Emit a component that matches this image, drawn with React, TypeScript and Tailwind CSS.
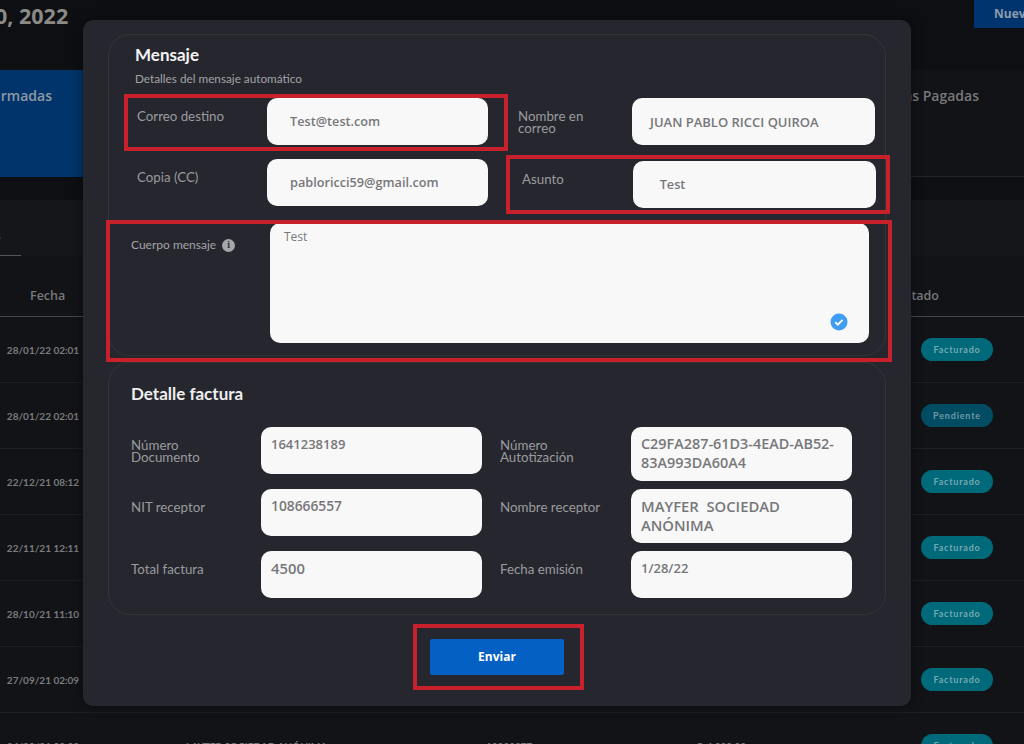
import React from "react";

const poppins = "font-['Lato',sans-serif]";
const mont = "font-['Open_Sans',sans-serif]";

function RedBox({ c }: { c: string }) {
  return <div className={`absolute border-[4px] border-[#c8212c] pointer-events-none ${c}`} />;
}

function Field({ label, value, labelW, inputW, h = "h-[47px]", px, top = "pt-[8px]", size = "text-[12.7px]", labelTop = "pt-[12px]", outer = "" }: { label: string; value: React.ReactNode; labelW: string; inputW: string; h?: string; px: string; top?: string; size?: string; labelTop?: string; outer?: string }) {
  return (
    <div className={`flex items-start ${outer}`}>
      <div className={`${labelW} ${labelTop} ${poppins} text-[13.3px] leading-[12px] text-[#9a9b9f]`}>{label}</div>
      <div className={`${inputW} ${h} ${px} ${top} ${size} ${mont} rounded-[10px] bg-[#f8f8f8] font-semibold leading-[18.5px] text-[#77777a]`}>{value}</div>
    </div>
  );
}

type Row = { d: string; s: string; name?: string; nit?: string; amt?: string };
const rows: Row[] = [
  { d: "28/01/22 02:01", s: "Facturado" },
  { d: "28/01/22 02:01", s: "Pendiente" },
  { d: "22/12/21 08:12", s: "Facturado" },
  { d: "22/11/21 12:11", s: "Facturado" },
  { d: "28/10/21 11:10", s: "Facturado" },
  { d: "27/09/21 02:09", s: "Facturado" },
  { d: "24/08/21 02:08", s: "Facturado", name: "LAYTER SOCIEDAD ANÓNIMA", nit: "10000377", amt: "Q 4,000.00" },
];

export default function App() {
  return (
    <div className="relative h-[744px] w-[1024px] overflow-hidden bg-[#121317]">
      <div className={`flex h-[70px] items-start justify-between bg-[#0e0f12] ${mont}`}>
        <div className="-ml-[5px] text-[21.5px] font-bold leading-[32px] text-[#8b8a87]">0, 2022</div>
        <div className="flex h-[28px] w-[50px] items-center overflow-hidden whitespace-nowrap bg-[#00346e] pl-[20px] text-[12px] font-bold text-[#8d9cb0]">Nueva</div>
      </div>
      <div className="flex h-[107px]">
        <div className={`w-[83px] bg-[#00346a] pt-[15px] pr-[31px] text-right text-[14px] font-semibold text-[#8f98a3] ${mont}`}>rmadas</div>
        <div className={`flex-1 border-b border-[#25262a] pt-[15px] pr-[45px] text-right text-[14px] font-semibold text-[#77787c] ${mont}`}>Facturas Pagadas</div>
      </div>
      <div className="h-[79px] bg-[#15161a]">
        <div className="h-[23px] bg-[#0e0f12]" />
        <div className={`mt-[27px] h-[29px] w-[21px] border-b border-[#55565a] pl-0 text-[12px] leading-[18px] text-[#77787c] ${mont}`}>
          <span className="-ml-[5px] inline-block">s</span>
        </div>
      </div>
      <div className={`flex h-[61px] items-end justify-between border-b border-[#45464a] pb-[10px] ${mont} text-[12.5px] font-semibold text-[#77787b]`}>
        <span className="ml-[30px]">Fecha</span>
        <span className="mr-[85px]">Estado</span>
      </div>
      {rows.map((r, i) => (
        <div key={i} className={`flex h-[66px] shrink-0 items-center justify-between border-b border-[#1d1e22] ${poppins}`}>
          <div className="flex items-center pt-[1px] text-[10px] font-bold text-[#7b7b7d]">
            <span className="w-[86px] text-center">{r.d}</span>
            {r.name && <span className="ml-[100px] w-[300px]">{r.name}</span>}
            {r.nit && <span className="w-[210px]">{r.nit}</span>}
            {r.amt && <span>{r.amt}</span>}
          </div>
          <span className={`mr-[31px] flex h-[23px] w-[72px] items-center justify-center rounded-full text-[9px] font-bold tracking-[0.8px] ${r.s === "Pendiente" ? "bg-[#004d63] text-[#6f9aa6]" : "bg-[#006a7a] text-[#76a8b0]"}`}>{r.s}</span>
        </div>
      ))}

      <div className="absolute left-[83px] top-[20px] h-[686px] w-[828px] rounded-[10px] bg-[#26272e] pl-[25px] pt-[14px] shadow-[0_0_12px_rgba(0,0,0,0.4)]">
        <div className="h-[322px] w-[778px] rounded-[22px] border border-[#34353b]">
          <div className={`pl-[26px] pt-[9px] ${poppins}`}>
            <div className="text-[17px] font-bold leading-[22px] text-[#f4f4f5]">Mensaje</div>
            <div className="mt-[6px] text-[11.75px] leading-[14px] text-[#a2a3a7]">Detalles del mensaje automático</div>
          </div>
          <div className="mt-[12px] grid grid-cols-[381px_358px] gap-y-[14px] pl-[28px]">
            <Field label="Correo destino" value="Test@test.com" labelW="w-[130px]" inputW="w-[221px]" px="pl-[23px]" top="pt-[14px]" />
            <Field label="Nombre en correo" value="JUAN PABLO RICCI QUIROA" size="text-[13px]" labelW="w-[114px] pr-[24px]" inputW="w-[243px]" px="pl-[18px]" top="pt-[15px]" />
            <Field label="Copia (CC)" value="pabloricci59@gmail.com" labelW="w-[130px]" inputW="w-[221px]" px="pl-[23px]" top="pt-[14px]" />
            <Field label="Asunto" value="Test" labelW="w-[115px] pl-[4px]" inputW="w-[244px]" px="pl-[27px]" top="pt-[14px]" outer="mt-[2px]" />
          </div>
          <div className="mt-[15px] flex items-start pl-[22px]">
            <div className={`flex w-[139px] items-center gap-[6px] pt-[15px] ${poppins} text-[12px] leading-[14px] text-[#a2a3a7]`}>
              Cuerpo mensaje
              <span className="flex h-[13px] w-[13px] items-center justify-center rounded-full bg-[#a5a6a9] font-serif text-[9px] font-bold text-[#26272e]">i</span>
            </div>
            <div className={`relative h-[120px] w-[599px] rounded-[10px] bg-[#f8f8f8] pl-[14px] pt-[5px] ${mont} text-[12px] font-medium leading-[18px] text-[#77787a]`}>
              Test
              <svg className="absolute bottom-[12px] right-[21px] h-[18px] w-[18px]" viewBox="0 0 18 18">
                <circle cx="9" cy="9" r="8.5" fill="#3e9df5" />
                <path d="M5.3 9.2l2.5 2.4 4.8-4.8" fill="none" stroke="#fff" strokeWidth="1.9" />
              </svg>
            </div>
          </div>
        </div>

        <div className="mt-[6px] h-[253px] w-[778px] rounded-[22px] border border-[#34353b] pl-[22px]">
          <div className={`pt-[20px] text-[17px] font-bold leading-[22px] text-[#eeeeef] ${poppins}`}>Detalle factura</div>
          <div className="mt-[22px] grid grid-cols-[369px_352px] gap-y-[8px]">
            <Field label="Número Documento" value="1641238189" size="text-[13px]" labelW="w-[130px] pr-[50px]" inputW="w-[221px]" px="pl-[10px]" />
            <Field label="Número Autotización" value={<span>C29FA287-61D3-4EAD-AB52-<br />83A993DA60A4</span>} size="text-[14.4px]" labelW="w-[131px] pr-[40px]" inputW="w-[221px]" h="h-[54px]" px="pl-[10px]" />
            <Field label="NIT receptor" value="108666557" size="text-[13.8px]" labelW="w-[130px]" inputW="w-[221px]" px="pl-[10px]" />
            <Field label="Nombre receptor" value={<span>MAYFER&nbsp; SOCIEDAD<br />ANÓNIMA</span>} size="text-[14.8px]" labelW="w-[131px]" inputW="w-[221px]" h="h-[54px]" px="pl-[10px]" />
            <Field label="Total factura" value="4500" size="text-[14.8px]" labelW="w-[130px]" inputW="w-[221px]" px="pl-[10px]" />
            <Field label="Fecha emisión" value="1/28/22" size="text-[13px]" labelW="w-[131px]" inputW="w-[221px]" px="pl-[10px]" />
          </div>
        </div>

        <div className="mt-[24px] flex justify-center pr-[25px]">
          <button className={`h-[36px] w-[134px] rounded-[2px] bg-[#0461c3] text-[12px] font-bold text-white ${mont}`}>Enviar</button>
        </div>
      </div>

      <RedBox c="left-[124px] top-[94px] h-[57px] w-[384px]" />
      <RedBox c="left-[506px] top-[155px] h-[59px] w-[384px]" />
      <RedBox c="left-[106px] top-[220px] h-[142px] w-[786px]" />
      <RedBox c="left-[413px] top-[624px] h-[66px] w-[171px]" />
    </div>
  );
}
